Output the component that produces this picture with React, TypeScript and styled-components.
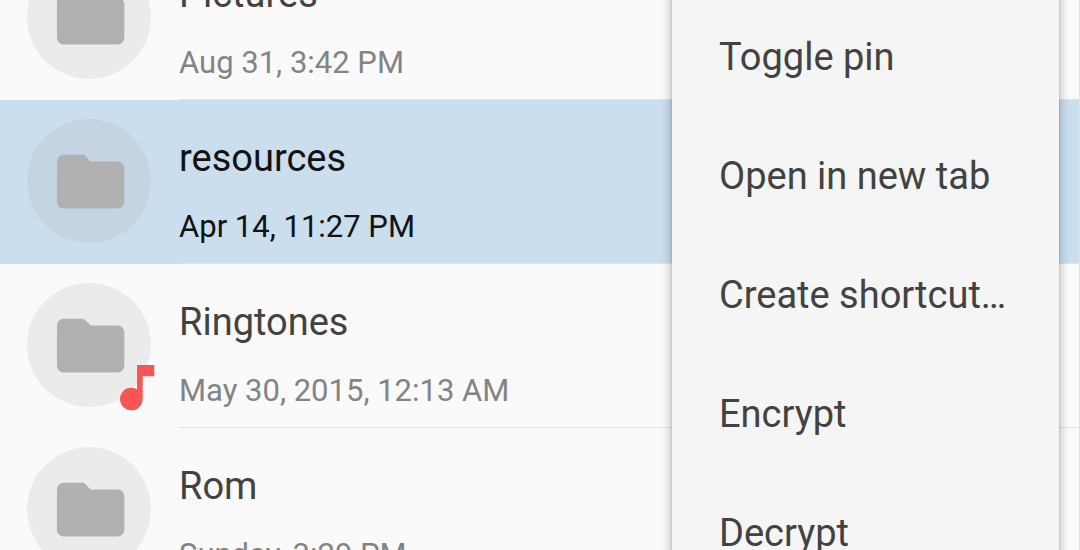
import React from "react";
import styled, { createGlobalStyle } from "styled-components";

const GlobalStyle = createGlobalStyle`
  * { box-sizing: border-box; }
  body {
    margin: 0;
    background: #fafafa;
    font-family: Roboto, "Liberation Sans", sans-serif;
  }
`;

const Screen = styled.main`
  position: relative;
  height: 100vh;
  overflow: hidden;
  background: #fafafa;
  border-right: 1px solid #e2e2e2;
`;

/* The list is scrolled part of the way through its first row. */
const FileList = styled.ul`
  list-style: none;
  margin: -64px 0 0;
  padding: 0;
`;

const Row = styled.li<{ $selected?: boolean }>`
  display: flex;
  height: 164px;
  padding-left: 27px;
  gap: 28px;
  background: ${(p) => (p.$selected ? "#cbdeed" : "transparent")};
  color: ${(p) => (p.$selected ? "#121212" : "#424242")};
`;

const Avatar = styled.div`
  position: relative;
  flex: none;
  width: 124px;
  height: 124px;
  margin-top: 19px;

  > svg { display: block; }
`;

const Badge = styled.svg`
  position: absolute;
  right: -4px;
  bottom: -4px;
`;

const Details = styled.div`
  flex: 1;
  display: flex;
  flex-direction: column;
  gap: 28px;
  padding-top: 36px;
  border-bottom: 1px solid #e3e3e3;
  white-space: nowrap;
`;

const Name = styled.span`
  font-size: 38px;
  line-height: 44px;
`;

const Modified = styled.time<{ $selected?: boolean }>`
  font-size: 31px;
  line-height: 38px;
  color: ${(p) => (p.$selected ? "#121212" : "#848484")};
`;

const Menu = styled.div`
  position: absolute;
  top: -51px;
  right: 20px;
  width: 387px;
  padding: 48px 0;
  background: #f5f5f5;
  box-shadow: 0 4px 10px rgba(0, 0, 0, 0.32), 0 0 2px rgba(0, 0, 0, 0.15);
`;

const MenuItem = styled.button`
  display: block;
  width: 100%;
  height: 119px;
  padding: 0 47px;
  border: 0;
  background: transparent;
  color: #424242;
  font-family: inherit;
  font-size: 38px;
  line-height: 44px;
  text-align: left;
  white-space: nowrap;
`;

function FolderIcon({ selected }: { selected?: boolean }) {
  return (
    <svg width="124" height="124" viewBox="0 0 124 124" aria-hidden="true">
      <circle cx="62" cy="62" r="62" fill={selected ? "#c5d4e3" : "#ebebeb"} />
      <path
        transform="translate(23.2 22.2) scale(3.37)"
        fill="#b1b1b1"
        d="M10 4H4c-1.1 0-1.99.9-1.99 2L2 18c0 1.1.9 2 2 2h16c1.1 0 2-.9 2-2V8c0-1.1-.9-2-2-2h-8l-2-2z"
      />
    </svg>
  );
}

function NoteBadge() {
  return (
    <Badge width="35" height="46" viewBox="0 0 35 46" aria-hidden="true">
      <path
        fill="#fa5555"
        d="M17 0H34.3V11.3H22.7V34A11.35 11.35 0 1 1 17 24.15Z"
      />
    </Badge>
  );
}

type FileEntry = {
  name: string;
  modified: string;
  selected?: boolean;
  music?: boolean;
};

const files: FileEntry[] = [
  { name: "Pictures", modified: "Aug 31, 3:42 PM" },
  { name: "resources", modified: "Apr 14, 11:27 PM", selected: true },
  { name: "Ringtones", modified: "May 30, 2015, 12:13 AM", music: true },
  { name: "Rom", modified: "Sunday, 3:29 PM" },
];

const actions = [
  "Toggle pin",
  "Open in new tab",
  "Create shortcut…",
  "Encrypt",
  "Decrypt",
];

export default function App() {
  return (
    <>
      <GlobalStyle />
      <Screen>
        <FileList>
          {files.map((file) => (
            <Row key={file.name} $selected={file.selected}>
              <Avatar>
                <FolderIcon selected={file.selected} />
                {file.music && <NoteBadge />}
              </Avatar>
              <Details>
                <Name>{file.name}</Name>
                <Modified $selected={file.selected}>{file.modified}</Modified>
              </Details>
            </Row>
          ))}
        </FileList>
        <Menu role="menu">
          {actions.map((action) => (
            <MenuItem key={action} type="button" role="menuitem">
              {action}
            </MenuItem>
          ))}
        </Menu>
      </Screen>
    </>
  );
}
